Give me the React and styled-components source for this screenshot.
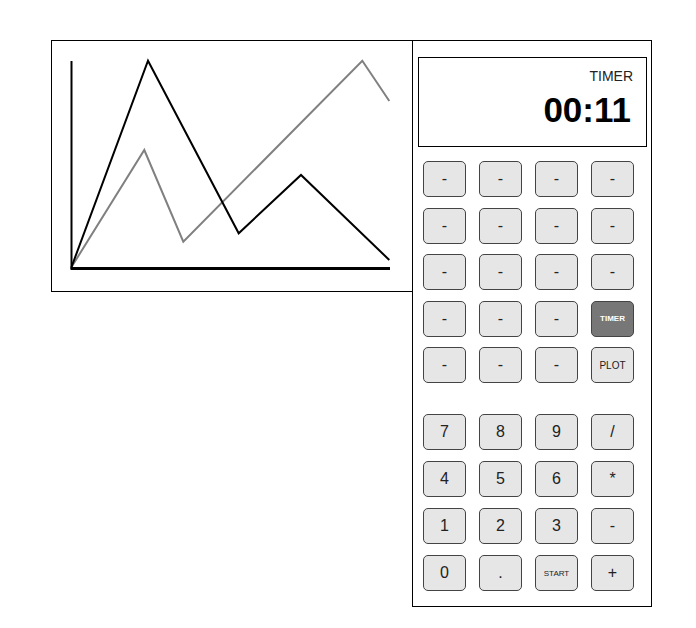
import React from "react";
import styled, { createGlobalStyle } from "styled-components";

const GlobalStyle = createGlobalStyle`
  body {
    margin: 0;
    background: #ffffff;
    font-family: "Liberation Sans", Arial, sans-serif;
  }
`;

const functionKeys = [
  "-", "-", "-", "-",
  "-", "-", "-", "-",
  "-", "-", "-", "-",
  "-", "-", "-", "TIMER",
  "-", "-", "-", "PLOT",
];

const numberKeys = [
  "7", "8", "9", "/",
  "4", "5", "6", "*",
  "1", "2", "3", "-",
  "0", ".", "START", "+",
];

const black = "19.5,226 96,19.7 186.7,192.3 249,134 337.3,219";
const gray = "19.5,226 92.3,109 131.3,200.7 310.3,19.7 337.3,60";

function Chart() {
  return (
    <svg width="360" height="250" viewBox="0 0 360 250">
      <polyline points={gray} fill="none" stroke="#808080" strokeWidth="2" />
      <polyline points={black} fill="none" stroke="#000" strokeWidth="2" />
      <line x1="19.5" y1="20" x2="19.5" y2="228" stroke="#000" strokeWidth="2" />
      <line x1="18.5" y1="227.5" x2="338" y2="227.5" stroke="#000" strokeWidth="3" />
    </svg>
  );
}

function keyKind(label) {
  if (label === "TIMER") return "active";
  if (label === "PLOT") return "small";
  if (label === "START") return "tiny";
  return "normal";
}

export default function App() {
  return (
    <>
      <GlobalStyle />
      <Page>
        <PlotPanel>
          <Chart />
        </PlotPanel>
        <Calculator>
          <Display>
            <DisplayLabel>TIMER</DisplayLabel>
            <DisplayValue>00:11</DisplayValue>
          </Display>
          <KeyGrid $gap="10.5px" $top="14px">
            {functionKeys.map((k, i) => (
              <Key key={i} $kind={keyKind(k)}>{k}</Key>
            ))}
          </KeyGrid>
          <KeyGrid $gap="11px" $top="31px">
            {numberKeys.map((k, i) => (
              <Key key={i} $kind={keyKind(k)}>{k}</Key>
            ))}
          </KeyGrid>
        </Calculator>
      </Page>
    </>
  );
}

const Page = styled.div`
  display: flex;
  align-items: flex-start;
  padding: 40px 0 0 51px;
`;

const PlotPanel = styled.div`
  box-sizing: border-box;
  width: 362px;
  height: 252px;
  border: 1px solid #000;
  margin-right: -1px;
  svg {
    display: block;
  }
`;

const Calculator = styled.div`
  box-sizing: border-box;
  width: 240px;
  height: 567px;
  border: 1px solid #000;
  padding: 16px 0 0 5px;
`;

const Display = styled.div`
  box-sizing: border-box;
  width: 229px;
  height: 90px;
  border: 1px solid #000;
  padding: 10px 13px 0 0;
  display: flex;
  flex-direction: column;
  align-items: flex-end;
`;

const DisplayLabel = styled.div`
  font-size: 14px;
  line-height: 16px;
  color: #222;
`;

const DisplayValue = styled.div`
  font-size: 35px;
  font-weight: bold;
  line-height: 40px;
  margin-top: 6px;
  margin-right: 2px;
  color: #000;
`;

const KeyGrid = styled.div`
  display: grid;
  grid-template-columns: repeat(4, 43px);
  grid-auto-rows: 36px;
  column-gap: 13px;
  row-gap: ${(p) => p.$gap};
  margin: ${(p) => p.$top} 0 0 5px;
`;

const sizes = { normal: "16px", small: "10px", tiny: "8px", active: "8px" };

const Key = styled.button`
  box-sizing: border-box;
  width: 43px;
  height: 36px;
  padding: 0;
  border: 1px solid #444;
  border-radius: 5px;
  font-family: "Liberation Sans", Arial, sans-serif;
  font-size: ${(p) => sizes[p.$kind]};
  font-weight: ${(p) => (p.$kind === "active" ? "bold" : "normal")};
  background: ${(p) => (p.$kind === "active" ? "#777777" : "#e6e6e6")};
  color: ${(p) => (p.$kind === "active" ? "#ffffff" : "#222222")};
  display: flex;
  align-items: center;
  justify-content: center;
`;
